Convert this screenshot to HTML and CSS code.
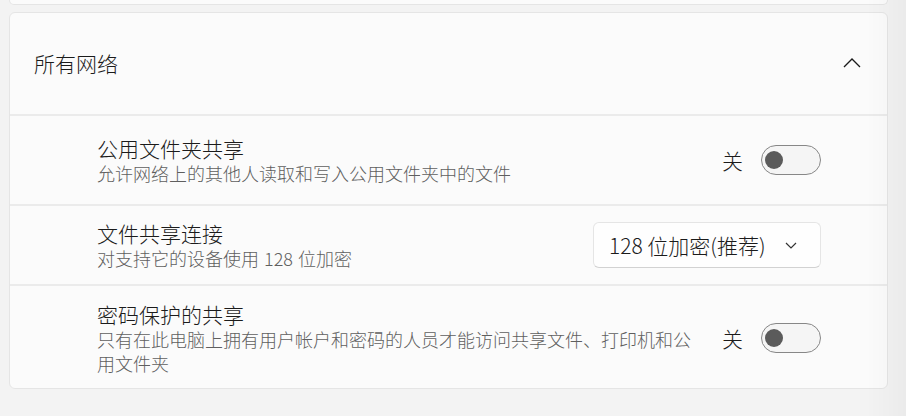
FILE: index.html
```html
<!DOCTYPE html>
<html lang="zh-CN">
<head>
<meta charset="utf-8">
<title>所有网络</title>
<link rel="stylesheet" href="styles.css">
</head>
<body>
<div class="page">
  <div class="card card-prev"></div>
  <div class="card">
    <div class="expander-head">
      <span class="head-title">所有网络</span>
      <svg class="chev-up" width="18" height="10" viewBox="0 0 18 10"><path d="M1 9 L9 1 L17 9" fill="none" stroke="#1a1a1a" stroke-width="1.3"/></svg>
    </div>
    <div class="row row-1">
      <div class="text">
        <div class="title">公用文件夹共享</div>
        <div class="desc">允许网络上的其他人读取和写入公用文件夹中的文件</div>
      </div>
      <div class="control">
        <span class="state">关</span>
        <span class="toggle"><span class="knob"></span></span>
      </div>
    </div>
    <div class="row row-2">
      <div class="text">
        <div class="title">文件共享连接</div>
        <div class="desc">对支持它的设备使用 <span class="num">128</span> 位加密</div>
      </div>
      <div class="control">
        <div class="dropdown">
          <span>128 位加密(推荐)</span>
          <svg width="12" height="7" viewBox="0 0 12 7"><path d="M1 1 L6 6 L11 1" fill="none" stroke="#333" stroke-width="1.2"/></svg>
        </div>
      </div>
    </div>
    <div class="row row-3">
      <div class="text">
        <div class="title">密码保护的共享</div>
        <div class="desc">只有在此电脑上拥有用户帐户和密码的人员才能访问共享文件、打印机和公用文件夹</div>
      </div>
      <div class="control">
        <span class="state">关</span>
        <span class="toggle"><span class="knob"></span></span>
      </div>
    </div>
  </div>
</div>
</body>
</html>
```

FILE: styles.css
```css
* { box-sizing: border-box; }

html, body {
  margin: 0;
  padding: 0;
  background: #f3f3f3;
  font-family: "Noto Sans", "Noto Sans CJK SC", sans-serif;
  font-weight: 300;
  color: #1b1b1b;
}

body::after {
  content: "";
  position: fixed;
  top: 0;
  right: 0;
  bottom: 0;
  width: 40px;
  background: linear-gradient(to right, rgba(0,0,0,0), rgba(0,0,0,0.03));
  pointer-events: none;
}

.page {
  width: 888px;
  padding-left: 9px;
}

.card {
  background: #fbfbfb;
  border: 1px solid #e5e5e5;
  border-radius: 6px;
}

.card-prev {
  height: 5px;
  border-top: none;
  border-radius: 0 0 6px 6px;
  margin-bottom: 7px;
}

.expander-head {
  height: 101px;
  display: flex;
  align-items: center;
  justify-content: space-between;
  padding: 0 26px 2px 24px;
}

.head-title {
  font-family: "Noto Sans CJK SC", sans-serif;
  font-size: 21px;
  line-height: 26px;
}

.chev-up { display: block; }

.row {
  display: flex;
  align-items: center;
  border-top: 2px solid #ebebeb;
  padding: 14px 66px 14px 87px;
}

.row-1 { min-height: 90px; }
.row-2 { min-height: 80px; padding-top: 12px; padding-bottom: 12px; }
.row-3 { min-height: 104px; padding-top: 13px; padding-bottom: 11px; }

.text {
  flex: 1;
  min-width: 0;
  padding-top: 4px;
}

.title {
  font-family: "Liberation Sans", "Noto Sans CJK SC", sans-serif;
  font-size: 21px;
  line-height: 26px;
  color: #1b1b1b;
}

.desc {
  font-family: "Liberation Sans", "Noto Sans CJK SC", sans-serif;
  font-size: 18px;
  line-height: 24px;
  color: #5f5f5f;
}

.num {
  font-family: "Noto Sans CJK SC", sans-serif;
  line-height: 1;
}

.control {
  display: flex;
  align-items: center;
  margin-left: 24px;
}

.state {
  font-family: "Noto Sans CJK SC", sans-serif;
  font-size: 21px;
  line-height: 26px;
  margin-right: 18px;
  color: #1b1b1b;
}

.toggle {
  width: 60px;
  height: 30px;
  border: 1.5px solid #878787;
  border-radius: 15px;
  background: #f5f5f5;
  display: flex;
  align-items: center;
  padding-left: 2.5px;
}

.knob {
  width: 18px;
  height: 18px;
  border-radius: 50%;
  background: #5b5b5b;
}

.dropdown {
  width: 228px;
  height: 46px;
  border: 1px solid #e5e5e5;
  border-bottom-color: #d2d2d2;
  border-radius: 6px;
  background: #fefefe;
  display: flex;
  align-items: center;
  justify-content: space-between;
  padding: 0 23px 0 15px;
  font-family: "Noto Sans CJK SC", sans-serif;
  font-size: 21px;
  color: #1b1b1b;
}

.dropdown svg { display: block; }
```
